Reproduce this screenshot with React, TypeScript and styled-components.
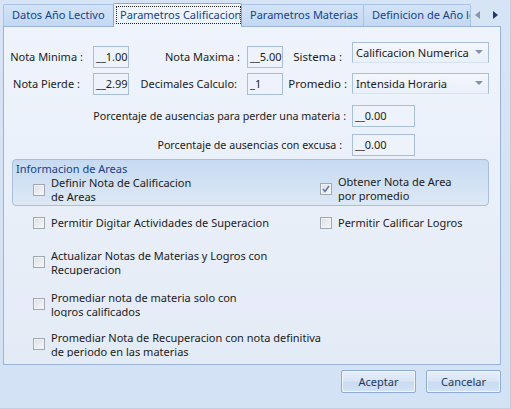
import React from "react";
import styled, { createGlobalStyle, css } from "styled-components";

const Global = createGlobalStyle`
  html, body { margin: 0; padding: 0; background: #d6e4f5; }
  body { font-family: "Noto Sans", "Open Sans", sans-serif; font-size: 11px; color: #1b1b1b; }
  * { box-sizing: border-box; }
`;

const Window = styled.div`
  width: 511px;
  height: 409px;
  background: linear-gradient(#d6e4f5, #d3e2f4);
  display: flex;
  flex-direction: column;
  overflow: hidden;
  border-right: 1px solid #c5d0de;
  border-bottom: 1px solid #c5d0de;
`;

const TabStrip = styled.div`
  height: 26px;
  display: flex;
  align-items: flex-end;
  padding-left: 3px;
`;

const Tab = styled.div<{ $active?: boolean; $w: number }>`
  width: ${(p) => p.$w}px;
  height: 22px;
  padding: 0 0 0 8px;
  line-height: 20px;
  color: #15428b;
  white-space: nowrap;
  overflow: hidden;
  border: 1px solid #a9c3e4;
  border-bottom: none;
  border-radius: 2px 2px 0 0;
  background: linear-gradient(#d3e3f8, #c3d8f3);
  margin-right: -1px;
  ${(p) =>
    p.$active &&
    css`
      background: #eef4fc;
      border-color: #8eaad0;
      position: relative;
      z-index: 2;
      margin-bottom: -1px;
      height: 24px;
      padding: 2px 0 0 2px;
    `}
`;

const Focus = styled.span`
  display: block;
  height: 18px;
  line-height: 16px;
  border: 1px dotted #222;
  padding-left: 3px;
  overflow: hidden;
  white-space: nowrap;
`;

const Scroller = styled.div`
  display: flex;
  gap: 13px;
  align-items: center;
  height: 22px;
  margin-left: 5px;
`;

const Arrow = styled.span<{ $dir: "l" | "r"; $on?: boolean }>`
  width: 0;
  height: 0;
  border-top: 4px solid transparent;
  border-bottom: 4px solid transparent;
  ${(p) =>
    p.$dir === "l"
      ? css`border-right: 5px solid ${p.$on ? "#1b3a6b" : "#8a96a6"};`
      : css`border-left: 5px solid ${p.$on ? "#1b3a6b" : "#8a96a6"};`}
`;

const Page = styled.div`
  margin: 0 9px 0 3px;
  height: 339px;
  border: 1px solid #9bb4d6;
  background: linear-gradient(#eff4fc, #e3ebf6);
  display: flex;
  flex-direction: column;
  overflow: hidden;
`;

const TopGrid = styled.div`
  margin-top: 15px;
  display: grid;
  grid-template-columns: 89px 36px 118px 36px 69px 137px;
  grid-template-rows: 26px 22px;
  row-gap: 5px;
`;

const Label = styled.div<{ $align?: string; $pr?: number; $fs?: number }>`
  align-self: end;
  height: 22px;
  line-height: 22px;
  white-space: nowrap;
  font-size: ${(p) => p.$fs ?? 11}px;
  text-align: ${(p) => p.$align || "right"};
  padding-right: ${(p) => p.$pr ?? 0}px;
`;

const MaskBox = styled.div`
  align-self: end;
  height: 22px;
  border: 1px solid #a9bfd9;
  background: #eef3fb;
  line-height: 20px;
  padding-left: 2px;
  white-space: nowrap;
  overflow: hidden;
`;

const Combo = styled.div`
  align-self: start;
  height: 21px;
  border: 1px solid #a8bedb;
  border-bottom-color: #d8e3f1;
  background: linear-gradient(#f4f7fc, #eaf0f9);
  display: flex;
  align-items: center;
  justify-content: space-between;
  padding: 0 5px 1px 3px;
  white-space: nowrap;
  font-size: 11.1px;
`;

const DropArrow = styled.span`
  width: 0;
  height: 0;
  border-left: 4px solid transparent;
  border-right: 4px solid transparent;
  border-top: 4px solid #7d93b0;
`;

const PctRow = styled.div<{ $mt: number; $pr: number }>`
  margin-top: ${(p) => p.$mt}px;
  display: grid;
  grid-template-columns: 348px 63px;
  ${Label} {
    padding-right: ${(p) => p.$pr}px;
  }
`;

const Group = styled.div`
  margin: 3px 0 0 8px;
  width: 477px;
  height: 47px;
  border: 1px solid #a8bfdc;
  border-radius: 4px;
  background: linear-gradient(#c6daf1 0%, #cfe0f3 40%, #dde8f5 100%);
  padding-left: 20px;
  overflow: hidden;
`;

const GroupTitle = styled.div`
  height: 16px;
  line-height: 16px;
  margin: 1px 0 -1px -17px;
  color: #15428b;
`;

const CheckGrid = styled.div`
  display: grid;
  grid-template-columns: 287px 1fr;
`;

const CheckItem = styled.div<{ $h: number; $mt?: number }>`
  height: ${(p) => p.$h}px;
  margin-top: ${(p) => p.$mt ?? 0}px;
  display: flex;
  align-items: center;
  overflow: hidden;
`;

const Box = styled.span`
  flex: none;
  width: 12px;
  height: 12px;
  border: 1px solid #a2a8b2;
  background: linear-gradient(135deg, #dcdee2, #f7f8fa);
  box-shadow: inset 0 0 0 1px #f2f3f5;
  margin-right: 6px;
  display: flex;
  align-items: center;
  justify-content: center;
`;

const CheckText = styled.span<{ $dy?: number }>`
  line-height: 14px;
  white-space: nowrap;
  position: relative;
  top: ${(p) => p.$dy ?? 0}px;
`;

const Lower = styled.div`
  padding-left: 29px;
`;

const Buttons = styled.div`
  display: flex;
  justify-content: flex-end;
  gap: 10px;
  padding: 5px 9px 0 0;
`;

const Button = styled.div`
  width: 75px;
  height: 23px;
  border: 1px solid #8eabd2;
  border-radius: 2px;
  background: linear-gradient(#e6eef9 0%, #dae6f6 45%, #c9dbf1 55%, #d4e3f5 100%);
  box-shadow: inset 0 0 0 1px #f0f5fc;
  color: #1e395b;
  text-align: center;
  line-height: 21px;
`;

function Check({ checked, lines, dy }: { checked?: boolean; lines: string[]; dy?: number }) {
  return (
    <>
      <Box>
        {checked && (
          <svg width="8" height="8" viewBox="0 0 8 8">
            <path d="M1 4 L3 6.5 L7 1" fill="none" stroke="#5d7ea8" strokeWidth="1.6" />
          </svg>
        )}
      </Box>
      <CheckText $dy={dy}>
        {lines.map((l, i) => (
          <React.Fragment key={i}>
            {i > 0 && <br />}
            {l}
          </React.Fragment>
        ))}
      </CheckText>
    </>
  );
}

export default function App() {
  return (
    <>
      <Global />
      <Window>
        <TabStrip>
          <Tab $w={111}>Datos Año Lectivo</Tab>
          <Tab $w={129} $active>
            <Focus>Parametros Calificacion</Focus>
          </Tab>
          <Tab $w={123}>Parametros Materias</Tab>
          <Tab $w={108}>Definicion de Año lectivo</Tab>
          <Scroller>
            <Arrow $dir="l" />
            <Arrow $dir="r" $on />
          </Scroller>
        </TabStrip>
        <Page>
          <TopGrid>
            <Label $align="center" $pr={4}>Nota Minima :</Label>
            <MaskBox>__1.00</MaskBox>
            <Label $pr={7}>Nota Maxima :</Label>
            <MaskBox>__5.00</MaskBox>
            <Label $pr={10} $fs={11.5}>Sistema :</Label>
            <Combo>
              Calificacion Numerica
              <DropArrow />
            </Combo>
            <Label $align="center" $pr={4}>Nota Pierde :</Label>
            <MaskBox>__2.99</MaskBox>
            <Label $pr={10}>Decimales Calculo:</Label>
            <MaskBox>_1</MaskBox>
            <Label $pr={5} $fs={11.5}>Promedio :</Label>
            <Combo>
              Intensida Horaria
              <DropArrow />
            </Combo>
          </TopGrid>
          <PctRow $mt={10} $pr={6}>
            <Label $fs={10.7}>Porcentaje de ausencias para perder una materia :</Label>
            <MaskBox>__0.00</MaskBox>
          </PctRow>
          <PctRow $mt={7} $pr={10}>
            <Label $fs={10.7}>Porcentaje de ausencias con excusa :</Label>
            <MaskBox>__0.00</MaskBox>
          </PctRow>
          <Group>
            <GroupTitle>Informacion de Areas</GroupTitle>
            <CheckGrid>
              <CheckItem $h={28}>
                <Check lines={["Definir Nota de Calificacion", "de Areas"]} />
              </CheckItem>
              <CheckItem $h={27} $mt={-1}>
                <Check checked lines={["Obtener Nota de Area", "por promedio"]} />
              </CheckItem>
            </CheckGrid>
          </Group>
          <Lower>
            <CheckGrid>
              <CheckItem $h={26} $mt={4}>
                <Check lines={["Permitir Digitar Actividades de Superacion"]} />
              </CheckItem>
              <CheckItem $h={26} $mt={4}>
                <Check lines={["Permitir Calificar Logros"]} />
              </CheckItem>
            </CheckGrid>
            <CheckItem $h={26} $mt={13}>
              <Check dy={1} lines={["Actualizar Notas de Materias y Logros con", "Recuperacion"]} />
            </CheckItem>
            <CheckItem $h={26} $mt={16}>
              <Check dy={1} lines={["Promediar nota de materia solo con", "logros calificados"]} />
            </CheckItem>
            <CheckItem $h={26} $mt={14}>
              <Check dy={1} lines={["Promediar Nota de Recuperacion con nota definitiva", "de periodo en las materias"]} />
            </CheckItem>
          </Lower>
        </Page>
        <Buttons>
          <Button>Aceptar</Button>
          <Button>Cancelar</Button>
        </Buttons>
      </Window>
    </>
  );
}
